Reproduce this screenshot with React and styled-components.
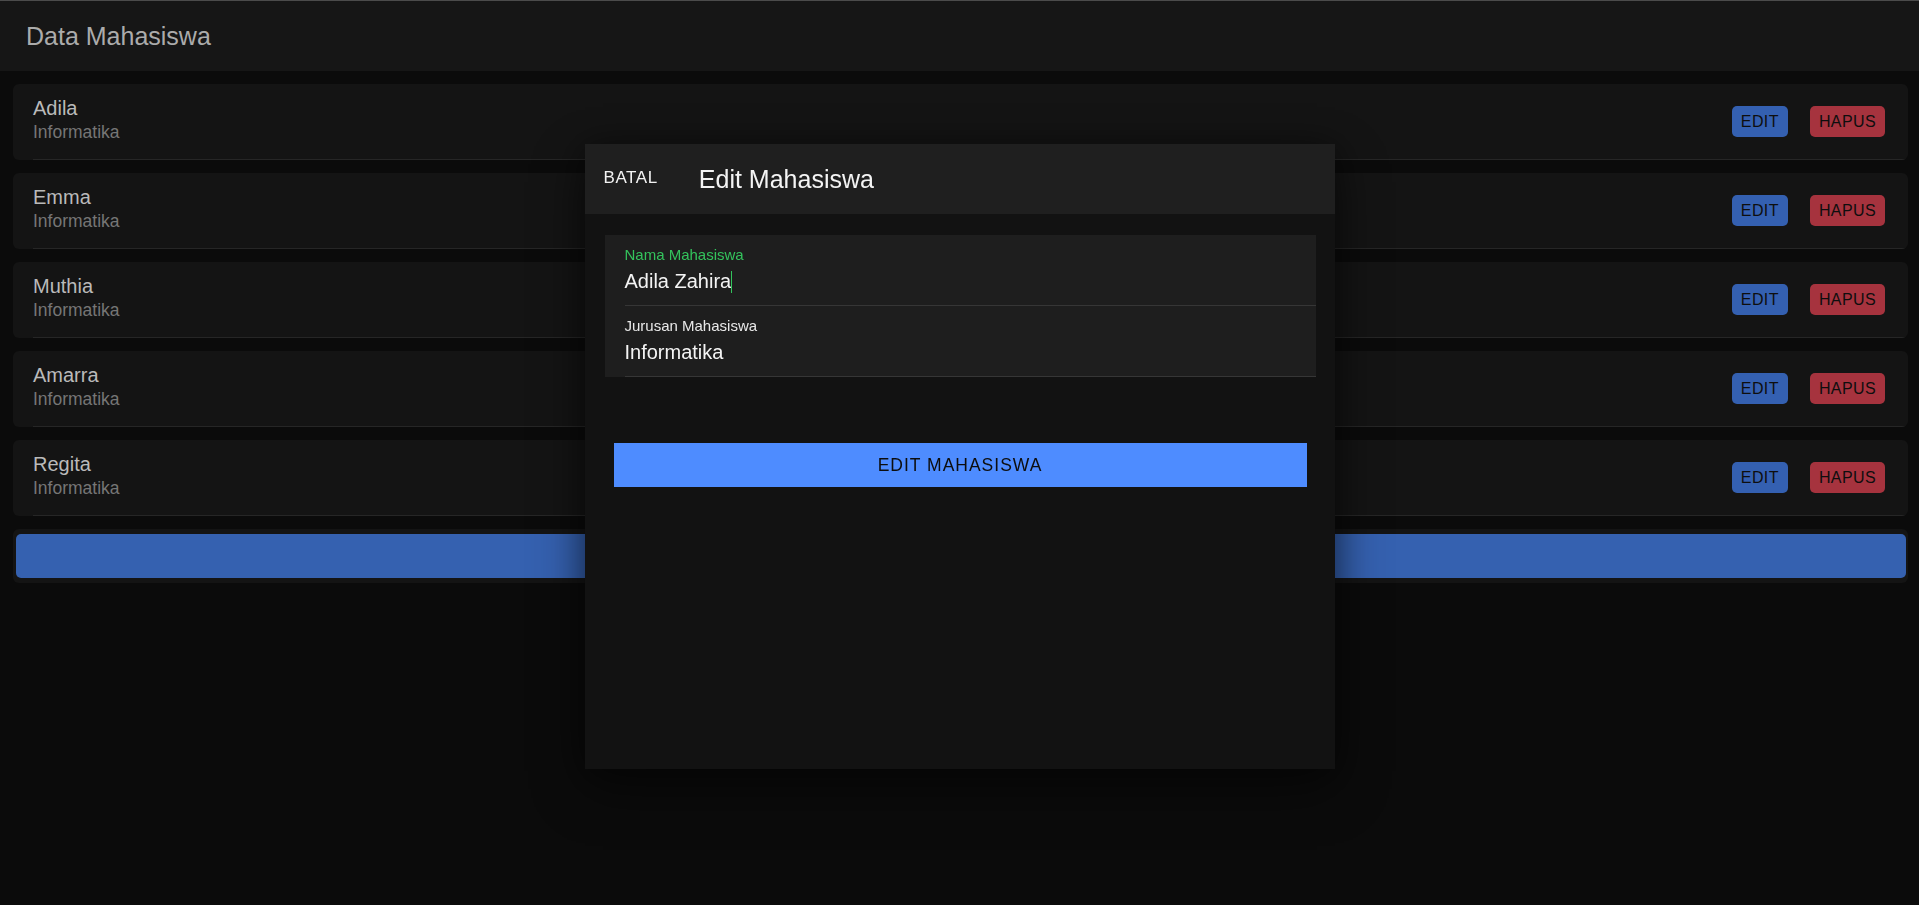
import React from 'react';
import styled, { createGlobalStyle } from 'styled-components';

const GlobalStyle = createGlobalStyle`
  html, body, #root {
    height: 100%;
  }
  body {
    margin: 0;
    background: #0b0b0b;
    font-family: "Liberation Sans", Arial, sans-serif;
    overflow: hidden;
  }
`;

const Page = styled.div`
  min-height: 100%;
  background: #0b0b0b;
`;

const TopBar = styled.header`
  height: 70px;
  border-top: 1px solid #4b4b4b;
  background: #161616;
  display: flex;
  align-items: center;
  padding-left: 26px;
`;

const Title = styled.h1`
  margin: 0;
  font-size: 25px;
  line-height: 29px;
  font-weight: 400;
  color: #ababab;
`;

const List = styled.main`
  display: flex;
  flex-direction: column;
  gap: 13px;
  padding: 13px 11px 0 13px;
`;

const StudentCard = styled.section`
  background: #141414;
  border-radius: 6px;
  padding-left: 20px;
  overflow: hidden;
`;

const ItemRow = styled.div`
  height: 75px;
  display: flex;
  align-items: center;
  padding-right: 23px;
  border-bottom: 1px solid #262626;
`;

const ItemText = styled.div`
  flex: 1;
  display: flex;
  flex-direction: column;
  gap: 2px;
  margin-bottom: 5px;
`;

const Name = styled.h2`
  margin: 0;
  font-size: 20px;
  line-height: 23px;
  font-weight: 400;
  color: #bababa;
`;

const Major = styled.p`
  margin: 0;
  font-size: 17.5px;
  line-height: 20px;
  color: #767676;
`;

const Actions = styled.div`
  display: flex;
  gap: 22px;
`;

const ActionButton = styled.button`
  height: 31px;
  padding: 0 9px;
  border: none;
  border-radius: 5px;
  background: ${(p) => (p.$danger ? '#a6333e' : '#3460b1')};
  color: #0e0e0e;
  font-family: inherit;
  font-size: 16px;
  letter-spacing: 0.4px;
  text-transform: uppercase;
`;

const AddCard = styled.section`
  background: #141414;
  border-radius: 6px;
  padding: 5px 2px 5px 3px;
`;

const AddButton = styled.button`
  display: block;
  width: 100%;
  height: 44px;
  border: none;
  border-radius: 5px;
  background: #3561b0;
`;

const ModalLayer = styled.div`
  position: fixed;
  inset: 0;
  display: flex;
  justify-content: center;
  align-items: flex-start;
  padding-top: 144px;
  pointer-events: none;
`;

const Modal = styled.div`
  width: 750px;
  height: 625px;
  background: #121212;
  display: flex;
  flex-direction: column;
  box-shadow: 0 20px 50px rgba(0, 0, 0, 0.45), 0 0 30px rgba(0, 0, 0, 0.35);
  pointer-events: auto;
`;

const ModalHeader = styled.div`
  height: 70px;
  background: #1f1f1f;
  display: flex;
  align-items: center;
  padding-left: 19px;
`;

const CancelButton = styled.button`
  border: none;
  background: none;
  padding: 0;
  color: #f2f2f2;
  font-family: inherit;
  font-size: 17px;
  letter-spacing: 0.6px;
  text-transform: uppercase;
  margin-top: -2px;
`;

const ModalTitle = styled.h2`
  margin: 0 0 0 41px;
  font-size: 25px;
  line-height: 29px;
  font-weight: 400;
  color: #f4f4f4;
`;

const ModalBody = styled.div`
  display: flex;
  flex-direction: column;
`;

const FormList = styled.div`
  margin: 21px 19px 0 20px;
  background: #1e1e1e;
  padding-left: 20px;
`;

const Field = styled.label`
  display: flex;
  flex-direction: column;
  gap: 6px;
  padding: 11px 0 12px;
  border-bottom: 1px solid #363636;
`;

const FieldLabel = styled.span`
  font-size: 15px;
  line-height: 18px;
  color: ${(p) => (p.$focused ? '#33c35c' : '#e8e8e8')};
`;

const FieldValue = styled.span`
  display: flex;
  align-items: center;
  font-size: 20px;
  line-height: 23px;
  color: #f4f4f4;
`;

const Caret = styled.span`
  display: inline-block;
  width: 1px;
  height: 22px;
  background: #33c35c;
`;

const SubmitButton = styled.button`
  margin: 66px 28px 0 29px;
  height: 44px;
  border: none;
  background: #4e8cff;
  color: #0d0d0d;
  font-family: inherit;
  font-size: 17.5px;
  letter-spacing: 1px;
  text-transform: uppercase;
`;

const students = ['Adila', 'Emma', 'Muthia', 'Amarra', 'Regita'];

export default function App() {
  return (
    <>
      <GlobalStyle />
      <Page>
        <TopBar>
          <Title>Data Mahasiswa</Title>
        </TopBar>
        <List>
          {students.map((name) => (
            <StudentCard key={name}>
              <ItemRow>
                <ItemText>
                  <Name>{name}</Name>
                  <Major>Informatika</Major>
                </ItemText>
                <Actions>
                  <ActionButton>Edit</ActionButton>
                  <ActionButton $danger>Hapus</ActionButton>
                </Actions>
              </ItemRow>
            </StudentCard>
          ))}
          <AddCard>
            <AddButton aria-label="Tambah" />
          </AddCard>
        </List>
      </Page>
      <ModalLayer>
        <Modal>
          <ModalHeader>
            <CancelButton>Batal</CancelButton>
            <ModalTitle>Edit Mahasiswa</ModalTitle>
          </ModalHeader>
          <ModalBody>
            <FormList>
              <Field>
                <FieldLabel $focused>Nama Mahasiswa</FieldLabel>
                <FieldValue>
                  Adila Zahira
                  <Caret />
                </FieldValue>
              </Field>
              <Field>
                <FieldLabel>Jurusan Mahasiswa</FieldLabel>
                <FieldValue>Informatika</FieldValue>
              </Field>
            </FormList>
            <SubmitButton>Edit Mahasiswa</SubmitButton>
          </ModalBody>
        </Modal>
      </ModalLayer>
    </>
  );
}
